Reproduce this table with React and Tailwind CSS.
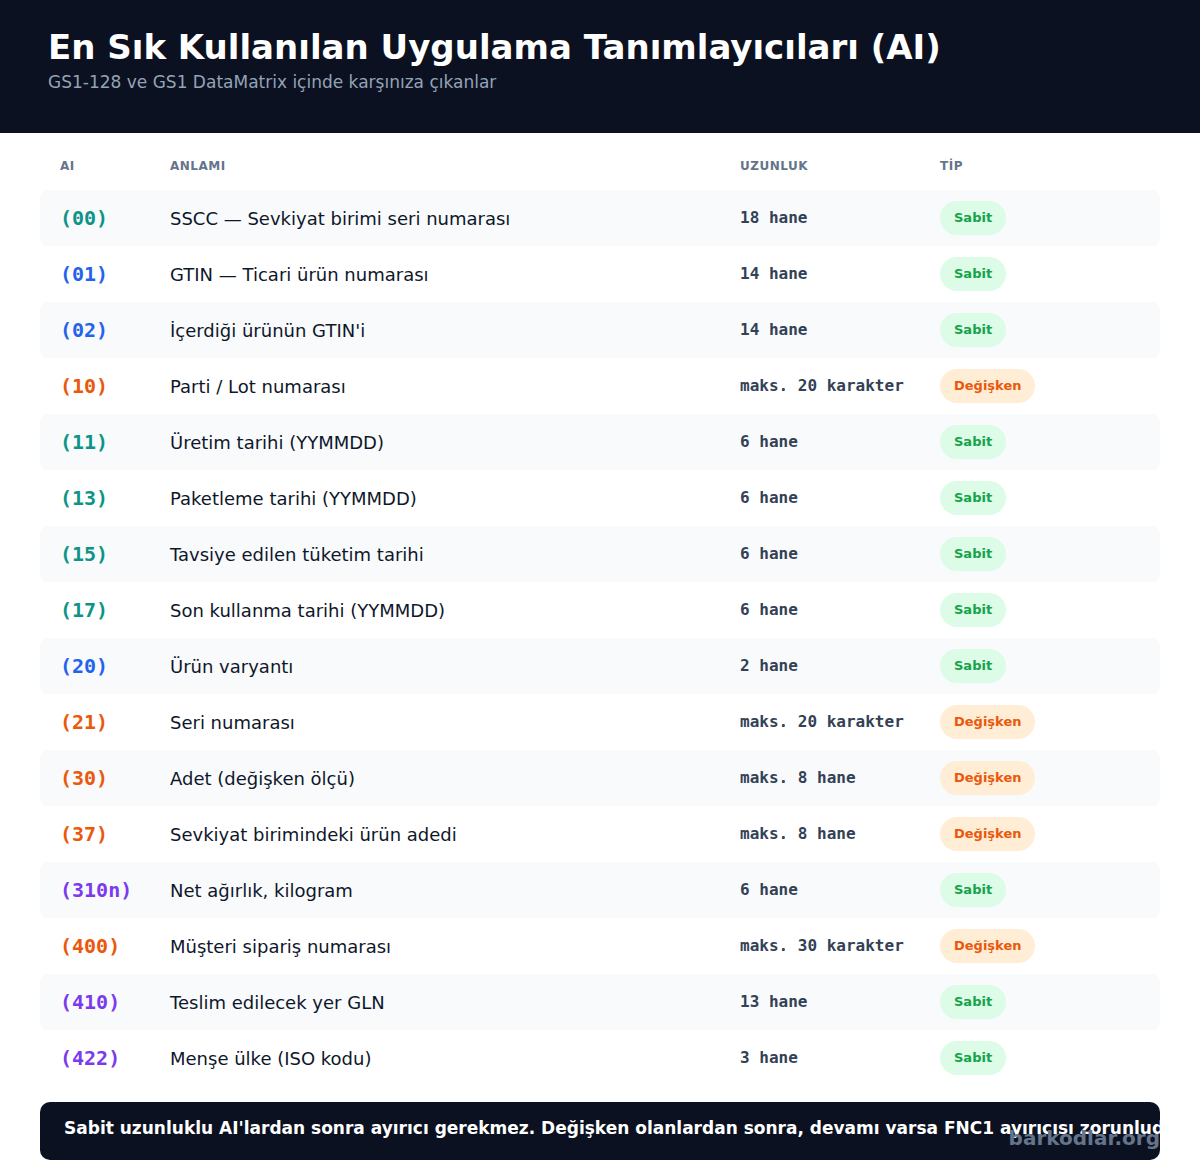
import React from "react";

const rows = [
  ["(00)", "teal", "SSCC — Sevkiyat birimi seri numarası", "18 hane", "s"],
  ["(01)", "blue", "GTIN — Ticari ürün numarası", "14 hane", "s"],
  ["(02)", "blue", "İçerdiği ürünün GTIN'i", "14 hane", "s"],
  ["(10)", "orange", "Parti / Lot numarası", "maks. 20 karakter", "d"],
  ["(11)", "teal", "Üretim tarihi (YYMMDD)", "6 hane", "s"],
  ["(13)", "teal", "Paketleme tarihi (YYMMDD)", "6 hane", "s"],
  ["(15)", "teal", "Tavsiye edilen tüketim tarihi", "6 hane", "s"],
  ["(17)", "teal", "Son kullanma tarihi (YYMMDD)", "6 hane", "s"],
  ["(20)", "blue", "Ürün varyantı", "2 hane", "s"],
  ["(21)", "orange", "Seri numarası", "maks. 20 karakter", "d"],
  ["(30)", "orange", "Adet (değişken ölçü)", "maks. 8 hane", "d"],
  ["(37)", "orange", "Sevkiyat birimindeki ürün adedi", "maks. 8 hane", "d"],
  ["(310n)", "purple", "Net ağırlık, kilogram", "6 hane", "s"],
  ["(400)", "orange", "Müşteri sipariş numarası", "maks. 30 karakter", "d"],
  ["(410)", "purple", "Teslim edilecek yer GLN", "13 hane", "s"],
  ["(422)", "purple", "Menşe ülke (ISO kodu)", "3 hane", "s"],
];

const codeColor = {
  teal: "text-[#0d9488]",
  blue: "text-[#2563eb]",
  orange: "text-[#ea580c]",
  purple: "text-[#7c3aed]",
};

const sans = "font-['DejaVu_Sans',sans-serif]";
const mono = "font-['DejaVu_Sans_Mono',monospace]";

export default function App() {
  return (
    <div className={`w-[1200px] h-[1172px] bg-white ${sans} overflow-hidden`}>
      <header className="h-[133px] bg-[#0b1120] pl-[48px] pt-[27px]">
        <h1 className="text-[34px] leading-[40px] font-bold text-white">
          En Sık Kullanılan Uygulama Tanımlayıcıları (AI)
        </h1>
        <p className="mt-[5px] text-[17px] leading-[20px] text-[#94a3b8]">
          GS1-128 ve GS1 DataMatrix içinde karşınıza çıkanlar
        </p>
      </header>

      <div className="px-[40px]">
        <div className="flex h-[57px] items-center pt-[9px] text-[12px] font-bold tracking-[0.5px] text-[#64748b]">
          <div className="w-[130px] pl-[20px]">AI</div>
          <div className="w-[570px]">ANLAMI</div>
          <div className="w-[200px]">UZUNLUK</div>
          <div>TİP</div>
        </div>
        <div className="flex flex-col">
          {rows.map(([code, color, meaning, len, type], i) => (
            <div
              key={code}
              className={`flex h-[56px] items-center rounded-[8px] ${
                i % 2 === 0 ? "bg-[#f8fafc]" : "bg-white"
              }`}
            >
              <div
                className={`w-[130px] pl-[20px] ${mono} text-[20px] font-bold ${codeColor[color]}`}
              >
                {code}
              </div>
              <div className="w-[570px] text-[18px] text-[#0f172a]">{meaning}</div>
              <div className={`w-[200px] ${mono} text-[16px] font-bold text-[#334155]`}>
                {len}
              </div>
              <div>
                {type === "s" ? (
                  <span className="inline-flex h-[34px] items-center rounded-full bg-[#dcfce7] px-[14px] text-[13px] font-bold text-[#16a34a]">
                    Sabit
                  </span>
                ) : (
                  <span className="inline-flex h-[34px] items-center rounded-full bg-[#ffedd5] px-[14px] text-[13px] font-bold text-[#ea580c]">
                    Değişken
                  </span>
                )}
              </div>
            </div>
          ))}
        </div>

        <div className="relative mt-[16px] h-[58px] rounded-[10px] bg-[#0b1120]">
          <p className="whitespace-nowrap pl-[24px] pt-[16px] text-[17px] leading-[20px] font-bold text-white">
            Sabit uzunluklu AI'lardan sonra ayırıcı gerekmez. Değişken olanlardan sonra, devamı varsa FNC1 ayırıcısı zorunludur.
          </p>
          <span className="absolute right-0 top-[24px] text-[20px] leading-[24px] font-bold text-[#64748b]">
            barkodlar.org
          </span>
        </div>
      </div>
    </div>
  );
}
